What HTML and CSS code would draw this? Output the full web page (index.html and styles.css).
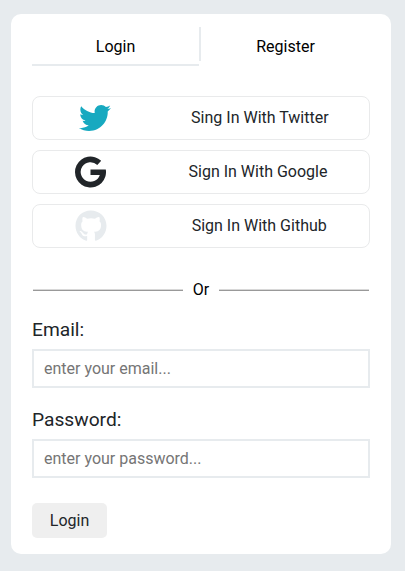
FILE: index.html
```html
<!DOCTYPE html>
<html lang="en">
<head>
<meta charset="utf-8">
<title>Login</title>
<link rel="stylesheet" href="styles.css">
</head>
<body>
<main class="card">
  <nav class="tabs">
    <a class="tab tab-active">Login</a>
    <span class="tab-divider"></span>
    <a class="tab">Register</a>
  </nav>
  <div class="socials">
    <button class="social" type="button">
      <svg class="icon twitter" viewBox="-80 0 592 512"><path d="M459.37 151.716c.325 4.548.325 9.097.325 13.645 0 138.72-105.583 298.558-298.558 298.558-59.452 0-114.68-17.219-161.137-47.106 8.447.974 16.568 1.299 25.34 1.299 49.055 0 94.213-16.568 130.274-44.832-46.132-.975-84.792-31.188-98.112-72.772 6.498.974 12.995 1.624 19.818 1.624 9.421 0 18.843-1.3 27.614-3.573-48.081-9.747-84.143-51.98-84.143-102.985v-1.299c13.969 7.797 30.214 12.67 47.431 13.319-28.264-18.843-46.781-51.005-46.781-87.391 0-19.492 5.197-37.36 14.294-52.954 51.655 63.675 129.3 105.258 216.365 109.807-1.624-7.797-2.599-15.918-2.599-24.04 0-57.828 46.782-104.934 104.934-104.934 30.213 0 57.502 12.67 76.67 33.137 23.715-4.548 46.456-13.32 66.599-25.34-7.798 24.366-24.366 44.833-46.132 57.827 21.117-2.273 41.584-8.122 60.426-16.243-14.292 20.791-32.161 39.308-52.628 54.253z"/></svg>
      <span>Sing In With Twitter</span>
    </button>
    <button class="social" type="button">
      <svg class="icon google" viewBox="0 0 31 32"><path d="M26.2 4.8A15.5 15.5 0 1 0 30.8 13.5H15.5V19H24.8A9.8 9.8 0 1 1 22.3 8.9Z"/></svg>
      <span>Sign In With Google</span>
    </button>
    <button class="social" type="button">
      <svg class="icon github" viewBox="0 0 496 512"><path d="M165.9 397.4c0 2-2.3 3.6-5.2 3.6-3.3.3-5.6-1.3-5.6-3.6 0-2 2.3-3.6 5.2-3.6 3-.3 5.6 1.3 5.6 3.6zm-31.1-4.5c-.7 2 1.3 4.3 4.3 4.9 2.6 1 5.6 0 6.2-2s-1.3-4.3-4.3-5.2c-2.6-.7-5.5.3-6.2 2.3zm44.2-1.7c-2.9.7-4.9 2.6-4.6 4.9.3 2 2.9 3.3 5.9 2.6 2.9-.7 4.9-2.6 4.6-4.6-.3-1.9-3-3.2-5.9-2.9zM244.8 8C106.1 8 0 113.3 0 252c0 110.9 69.8 205.8 169.5 239.2 12.8 2.3 17.3-5.6 17.3-12.1 0-6.2-.3-40.4-.3-61.4 0 0-70 15-84.7-29.8 0 0-11.4-29.1-27.8-36.6 0 0-22.9-15.7 1.6-15.4 0 0 24.9 2 38.6 25.8 21.9 38.6 58.6 27.5 72.9 20.9 2.3-16 8.8-27.1 16-33.7-55.9-6.2-112.3-14.3-112.3-110.5 0-27.5 7.6-41.3 23.6-58.9-2.6-6.5-11.1-33.3 2.6-67.9 20.9-6.5 69 27 69 27 20-5.6 41.5-8.5 62.8-8.5s42.8 2.9 62.8 8.5c0 0 48.1-33.6 69-27 13.7 34.7 5.2 61.4 2.6 67.9 16 17.7 25.8 31.5 25.8 58.9 0 96.5-58.9 104.2-114.8 110.5 9.2 7.9 17 22.9 17 46.4 0 33.7-.3 75.4-.3 83.6 0 6.5 4.6 14.4 17.3 12.1C428.2 457.8 496 362.9 496 252 496 113.3 383.5 8 244.8 8z"/></svg>
      <span>Sign In With Github</span>
    </button>
  </div>
  <div class="separator"><span>Or</span></div>
  <form class="form">
    <label class="label" for="email">Email:</label>
    <input class="input" id="email" type="email" placeholder="enter your email...">
    <label class="label" for="password">Password:</label>
    <input class="input" id="password" type="password" placeholder="enter your password...">
    <button class="submit" type="button">Login</button>
  </form>
</main>
</body>
</html>
```
FILE: styles.css
```css
* {
  box-sizing: border-box;
}

body {
  margin: 0;
  padding: 14px 14px 17px 11px;
  background: #e7ebee;
  color: #212529;
  font: 16px/24px Roboto, sans-serif;
}

.card {
  height: 540px;
  padding: 13px 21px 0;
  border-radius: 10px;
  background: #fff;
}

.tabs {
  display: flex;
  height: 39px;
  color: #000;
}

.tab {
  flex: 1;
  padding-top: 8px;
  text-align: center;
}

.tab-active {
  flex: 0 0 167px;
  border-bottom: 2px solid #e7ebee;
}

.tab-divider {
  width: 2px;
  height: 34px;
  background: #e7ebee;
}

.socials {
  display: grid;
  gap: 10px;
  margin-top: 30px;
}

.social {
  display: flex;
  align-items: center;
  justify-content: space-around;
  height: 44px;
  padding: 0;
  border: 1px solid #e9eaeb;
  border-radius: 8px;
  background: #fff;
  color: #212529;
  font: inherit;
}

.icon {
  height: 32px;
  fill: currentColor;
}

.twitter {
  width: 37px;
  margin: 0 -1px 0 1px;
  color: #17a9c0;
}

.google {
  width: 31px;
}

.github {
  width: 32px;
  color: #e7ebee;
}

.separator {
  display: flex;
  align-items: center;
  gap: 10px;
  height: 24px;
  margin: 30px 1px 0;
  color: #000;
}

.separator::before,
.separator::after {
  content: "";
  flex: 1;
  height: 1px;
  border-top: 1px solid #d8d8d8;
  background: #999;
}

.form {
  display: flex;
  flex-direction: column;
  margin-top: 14px;
}

.label {
  height: 33px;
  font-size: 19.2px;
  line-height: 28px;
}

.input {
  height: 39px;
  margin-bottom: 18px;
  padding: 0 10px;
  border: 2px solid #e7ebee;
  background: #fff;
  font: inherit;
}

.input::placeholder {
  color: #757575;
}

.submit {
  align-self: flex-start;
  width: 75px;
  height: 35px;
  margin-top: 7px;
  padding: 0;
  border: 0;
  border-radius: 5px;
  background: #efefef;
  color: #212529;
  font: inherit;
}
```
